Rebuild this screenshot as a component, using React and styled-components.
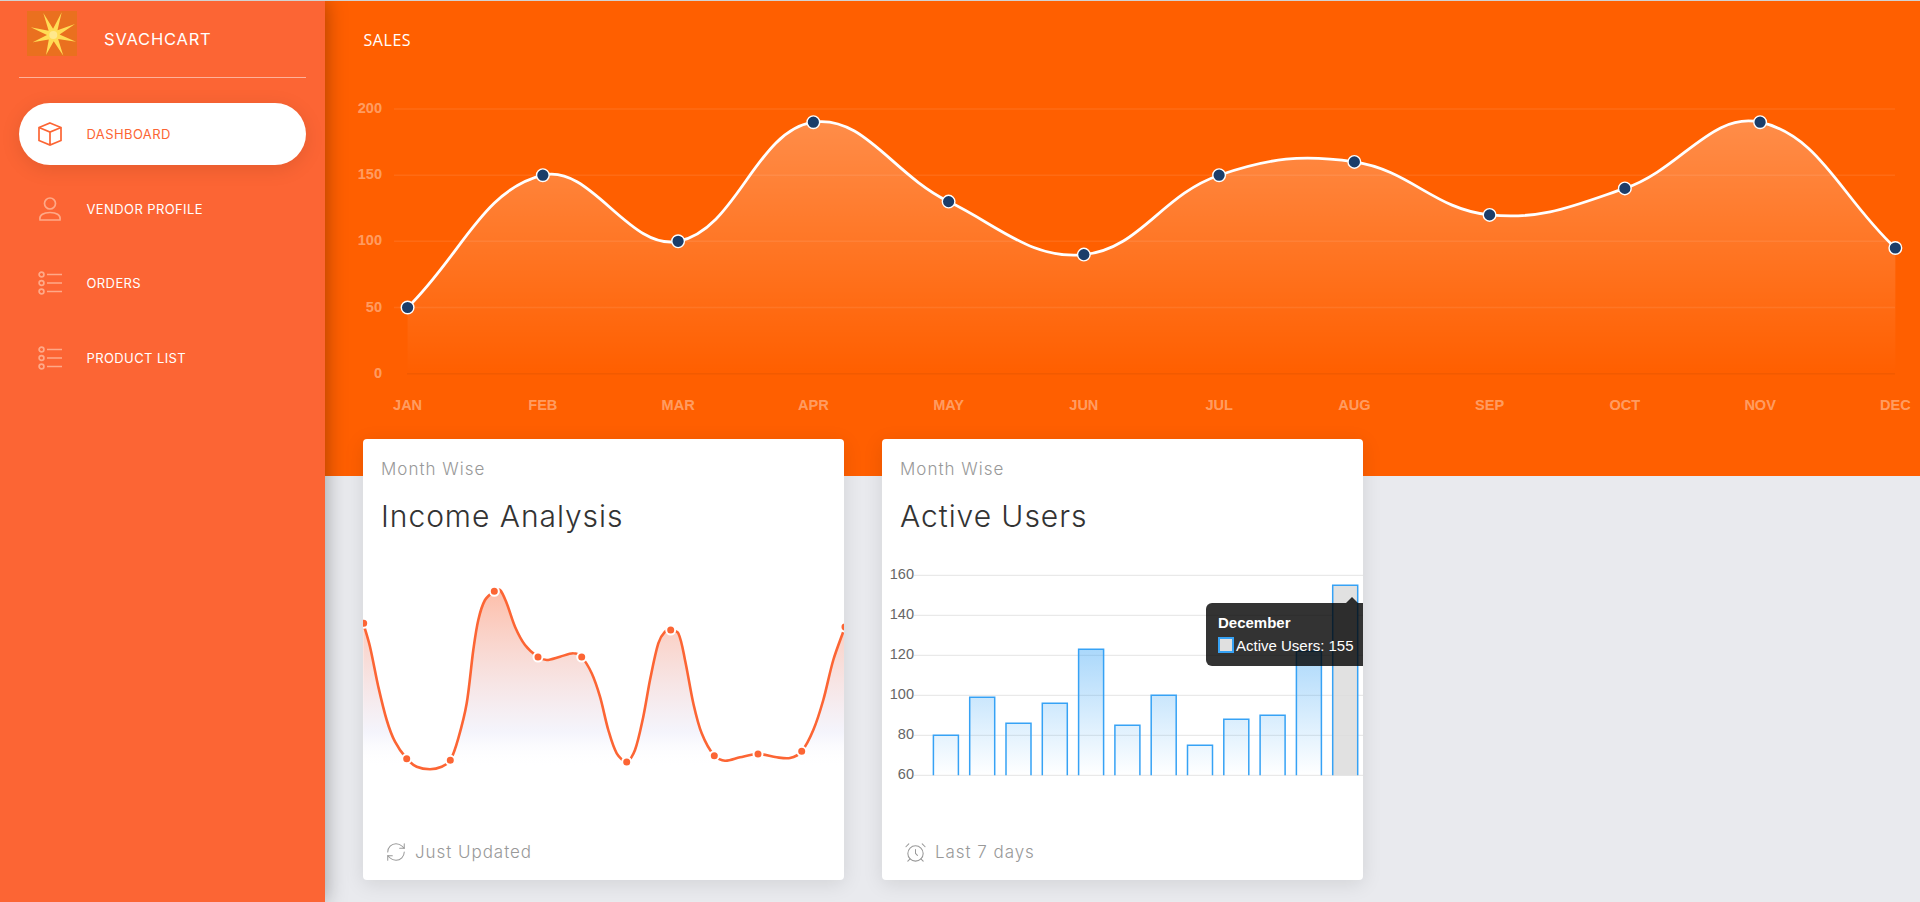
import React from 'react'
import styled, { createGlobalStyle } from 'styled-components'
import { AlarmClock, RefreshCw } from 'lucide-react'

const UI_FONT = `Inter, 'Noto Sans', sans-serif`
const CHART_FONT = `'Liberation Sans', Arial, sans-serif`

// chart.js style spline, tension 0.4
function spline(pts, t = 0.4) {
  let d = `M${pts[0][0]} ${pts[0][1]}`
  const ctrl = pts.map((p, i) => {
    const prev = pts[i - 1] || p
    const next = pts[i + 1] || p
    const d01 = Math.hypot(p[0] - prev[0], p[1] - prev[1])
    const d12 = Math.hypot(next[0] - p[0], next[1] - p[1])
    const sum = d01 + d12 || 1
    const fa = (t * d01) / sum
    const fb = (t * d12) / sum
    return {
      in: [p[0] - fa * (next[0] - prev[0]), p[1] - fa * (next[1] - prev[1])],
      out: [p[0] + fb * (next[0] - prev[0]), p[1] + fb * (next[1] - prev[1])],
    }
  })
  for (let i = 1; i < pts.length; i++) {
    const a = ctrl[i - 1].out
    const b = ctrl[i].in
    d += `C${a[0].toFixed(1)} ${a[1].toFixed(1)} ${b[0].toFixed(1)} ${b[1].toFixed(1)} ${pts[i][0]} ${pts[i][1]}`
  }
  return d
}

const months = ['JAN', 'FEB', 'MAR', 'APR', 'MAY', 'JUN', 'JUL', 'AUG', 'SEP', 'OCT', 'NOV', 'DEC']
const sales = [50, 150, 100, 190, 130, 90, 150, 160, 120, 140, 190, 95]
const salesX = (i) => 407.6 + i * 135.25
const salesY = (v) => 373.7 - v * 1.3235
const salesPts = sales.map((v, i) => [salesX(i), +salesY(v).toFixed(1)])
const salesLine = spline(salesPts)

// traced off the income card, offset by the card position
const incomeTrace = [
  [40, 580], [60, 650], [85, 770], [110, 870], [135, 935], [170, 986], [200, 1010], [240, 1018], [275, 1010],
  [301, 991], [325, 925], [350, 820], [370, 660], [385, 570], [405, 510], [433, 484], [450, 480], [470, 520],
  [495, 590], [525, 645], [564, 681], [590, 690], [630, 680], [670, 670], [695, 681], [725, 730], [750, 800],
  [775, 900], [800, 970], [830, 996], [855, 960], [880, 860], [900, 750], [925, 640], [945, 605], [962, 600],
  [985, 610], [1005, 690], [1030, 820], [1055, 910], [1093, 977], [1125, 992], [1170, 982], [1224, 972],
  [1280, 982], [1320, 984], [1355, 964], [1390, 900], [1420, 810], [1450, 690], [1485, 591],
].map(([x, y]) => [+(350 + x / 3).toFixed(1), +(430 + y / 3).toFixed(1)])
const incomeLine = spline(incomeTrace, 0.3)
const incomeDots = [
  [363.7, 623.3], [406.7, 758.7], [450.3, 760.3], [494.3, 591.3], [538, 657], [581.7, 657],
  [626.7, 762], [670.7, 630], [714.3, 755.7], [758, 754], [801.7, 751.3], [845, 627],
]

const users = [80, 99, 86, 96, 123, 85, 100, 75, 88, 90, 122, 155]
const userTicks = [160, 140, 120, 100, 80, 60]
const userY = (v) => 775.3 - (v - 60) * 2

const starTips = [
  [34.7, 1.3], [48, 13], [49, 30.7], [36.3, 44.7], [19, 44], [5.7, 31.3], [3.7, 16.3], [16.3, 2],
]
const starPoints = starTips
  .flatMap(([x, y], i) => {
    const [nx, ny] = starTips[(i + 1) % starTips.length]
    const mx = (x + nx) / 2 - 26.3
    const my = (y + ny) / 2 - 24
    const len = Math.hypot(mx, my)
    return [`${x},${y}`, `${26.3 + (mx / len) * 6.3},${24 + (my / len) * 6.3}`]
  })
  .join(' ')

function Logo() {
  return (
    <LogoBox viewBox="0 0 50 45">
      <Star points={starPoints} />
      <circle cx="26.3" cy="24" r="4" fill="#FFE88C" />
    </LogoBox>
  )
}

const BoxIcon = () => (
  <NavSvg viewBox="0 0 24 24">
    <path d="M12 1 L23 5.5 V18.5 L12 23 L1 18.5 V5.5 Z M1 5.5 L12 10 L23 5.5 M12 10 V23" />
  </NavSvg>
)

const UserIcon = () => (
  <NavSvg viewBox="0 0 24 24">
    <circle cx="12" cy="6.5" r="5.5" />
    <path d="M2 23 C1 17.5 6 15.5 12 15.5 C18 15.5 23 17.5 22 23 Z" />
  </NavSvg>
)

const ListIcon = () => (
  <NavSvg viewBox="0 0 24 24">
    <circle cx="3.5" cy="3.5" r="2.4" />
    <circle cx="3.5" cy="12" r="2.4" />
    <circle cx="3.5" cy="20.5" r="2.4" />
    <path d="M9 3.5 H24 M9 12 H24 M9 20.5 H24" />
  </NavSvg>
)

const navItems = [
  { label: 'DASHBOARD', icon: BoxIcon, active: true },
  { label: 'VENDOR PROFILE', icon: UserIcon },
  { label: 'ORDERS', icon: ListIcon },
  { label: 'PRODUCT LIST', icon: ListIcon },
]

function SalesChart() {
  return (
    <ChartSvg width="1595" height="370" viewBox="325 60 1595 370">
      <defs>
        <linearGradient id="salesFill" gradientUnits="userSpaceOnUse" x1="0" y1="109" x2="0" y2="373">
          <stop offset="0" stopColor="#fff" stopOpacity="0.3" />
          <stop offset="1" stopColor="#fff" stopOpacity="0" />
        </linearGradient>
      </defs>
      {[200, 150, 100, 50].map((v) => (
        <line key={v} x1="394" x2="1895" y1={salesY(v)} y2={salesY(v)} stroke="rgba(255,255,255,0.08)" strokeWidth="1.5" />
      ))}
      <line x1="407" x2="1895" y1={salesY(0)} y2={salesY(0)} stroke="#F25A00" strokeWidth="1.5" />
      {[200, 150, 100, 50, 0].map((v) => (
        <SalesTick key={v} x="382" y={salesY(v) + 4} textAnchor="end">
          {v}
        </SalesTick>
      ))}
      {months.map((m, i) => (
        <SalesTick key={m} x={salesX(i)} y="410" textAnchor="middle">
          {m}
        </SalesTick>
      ))}
      <path d={`${salesLine}L${salesX(11)} 373.7L${salesX(0)} 373.7Z`} fill="url(#salesFill)" />
      <path d={salesLine} fill="none" stroke="#fff" strokeWidth="2.8" />
      {salesPts.map(([x, y]) => (
        <circle key={x} cx={x} cy={y} r="6.3" fill="#1C3D69" stroke="#fff" strokeWidth="1.4" />
      ))}
    </ChartSvg>
  )
}

function IncomeChart() {
  return (
    <ChartSvg width="482" height="250" viewBox="363 560 482 250">
      <defs>
        <linearGradient id="incomeFill" gradientUnits="userSpaceOnUse" x1="0" y1="591" x2="0" y2="768">
          <stop offset="0" stopColor="#FC6534" stopOpacity="0.42" />
          <stop offset="0.8" stopColor="#DCDCF5" stopOpacity="0.3" />
          <stop offset="1" stopColor="#fff" stopOpacity="0" />
        </linearGradient>
      </defs>
      <path d={`${incomeLine}L845 810L363 810Z`} fill="url(#incomeFill)" />
      <path d={incomeLine} fill="none" stroke="#FC6534" strokeWidth="2.6" />
      {incomeDots.map(([x, y]) => (
        <circle key={x} cx={x} cy={y} r="4.5" fill="#FC6534" stroke="#fff" strokeWidth="2" />
      ))}
    </ChartSvg>
  )
}

function UsersChart() {
  return (
    <ChartArea>
      <ChartSvg width="481" height="250" viewBox="882 560 481 250">
        <defs>
          <linearGradient id="barFill" gradientUnits="userSpaceOnUse" x1="0" y1="640" x2="0" y2="775">
            <stop offset="0" stopColor="#36A2F5" stopOpacity="0.45" />
            <stop offset="1" stopColor="#36A2F5" stopOpacity="0" />
          </linearGradient>
        </defs>
        {userTicks.map((v) => (
          <g key={v}>
            <line x1="914" x2="1363" y1={userY(v)} y2={userY(v)} stroke="#E4E4E4" strokeWidth="1" />
            <UserTick x="914" y={userY(v) + 4} textAnchor="end">
              {v}
            </UserTick>
          </g>
        ))}
        {users.map((v, i) => {
          const x = 933.4 + i * 36.3
          const y = userY(v)
          return (
            <path
              key={i}
              d={`M${x} 775.3V${y}H${x + 25}V775.3`}
              fill={i === 11 ? 'rgba(220,220,220,0.85)' : 'url(#barFill)'}
              stroke="#36A2F5"
              strokeWidth="1.5"
            />
          )
        })}
      </ChartSvg>
      <Tooltip>
        <TooltipTitle>December</TooltipTitle>
        <TooltipRow>
          <Swatch />
          Active Users: 155
        </TooltipRow>
      </Tooltip>
    </ChartArea>
  )
}

function App() {
  return (
    <Page>
      <GlobalStyle />
      <Sidebar>
        <Brand>
          <Logo />
          <BrandName>SVACHCART</BrandName>
        </Brand>
        <Nav>
          {navItems.map(({ label, icon: Icon, active }) => (
            <NavItem key={label} $active={active}>
              <Icon />
              {label}
            </NavItem>
          ))}
        </Nav>
      </Sidebar>
      <Main>
        <Hero>
          <HeroTitle>SALES</HeroTitle>
          <SalesChart />
        </Hero>
        <Cards>
          <Card>
            <CardSub>Month Wise</CardSub>
            <CardTitle>Income Analysis</CardTitle>
            <IncomeChart />
            <CardFooter>
              <RefreshCw size={22} strokeWidth={1.1} />
              Just Updated
            </CardFooter>
          </Card>
          <Card>
            <CardSub>Month Wise</CardSub>
            <CardTitle>Active Users</CardTitle>
            <UsersChart />
            <CardFooter>
              <AlarmClock size={23} strokeWidth={1.1} />
              Last 7 days
            </CardFooter>
          </Card>
        </Cards>
      </Main>
    </Page>
  )
}

const GlobalStyle = createGlobalStyle`
  * {
    box-sizing: border-box;
  }
  body {
    margin: 0;
    background: #e9eaee;
    font-family: ${UI_FONT};
  }
`

const Page = styled.div`
  display: flex;
  height: 902px;
  overflow: hidden;
  border-top: 1px solid #d2d2d2;
`

const Sidebar = styled.aside`
  position: relative;
  z-index: 2;
  flex: 0 0 325px;
  padding: 0 19px;
  background: #fc6534;
  box-shadow: 0 0 20px rgba(0, 0, 0, 0.35);
`

const Brand = styled.div`
  display: flex;
  align-items: center;
  height: 77px;
  padding: 0 0 0 8px;
  border-bottom: 1px solid rgba(255, 255, 255, 0.5);
`

const LogoBox = styled.svg`
  width: 50px;
  height: 45px;
  margin-top: -11px;
  background: #ea701f;
`

const Star = styled.polygon`
  fill: #ffdc55;
  filter: blur(0.4px);
`

const BrandName = styled.span`
  margin-left: 27px;
  color: #fff;
  font-size: 16.5px;
  letter-spacing: 0.8px;
`

const Nav = styled.nav`
  display: flex;
  flex-direction: column;
  gap: 12.5px;
  margin-top: 25px;
`

const NavSvg = styled.svg`
  width: 24px;
  height: 24px;
  fill: none;
  stroke: currentColor;
  stroke-width: 1.7;
`

const NavItem = styled.a`
  display: flex;
  align-items: center;
  gap: 24.5px;
  height: 62px;
  padding-left: 19px;
  border-radius: 31px;
  font-size: 13px;
  letter-spacing: 0.4px;
  color: ${(p) => (p.$active ? '#fc6534' : '#fff')};
  background: ${(p) => (p.$active ? '#fff' : 'transparent')};
  box-shadow: ${(p) => (p.$active ? '0 4px 20px rgba(0, 0, 0, 0.1)' : 'none')};

  svg {
    color: ${(p) => (p.$active ? '#fc6534' : '#fea988')};
  }
`

const Main = styled.main`
  flex: 1;
  min-width: 0;
`

const Hero = styled.section`
  height: 475px;
  background: #ff5f00;
`

const HeroTitle = styled.h2`
  margin: 0;
  padding: 28px 0 9px 38.5px;
  height: 59px;
  color: #fff;
  font-family: 'Open Sans', sans-serif;
  font-size: 16px;
  line-height: 22px;
  font-weight: 400;
  letter-spacing: 0.55px;
`

const ChartSvg = styled.svg`
  display: block;
`

const SalesTick = styled.text`
  font-family: ${CHART_FONT};
  font-size: 14.5px;
  font-weight: 700;
  fill: rgba(255, 255, 255, 0.4);
`

const UserTick = styled.text`
  font-family: ${CHART_FONT};
  font-size: 14.5px;
  fill: #666;
`

const Cards = styled.div`
  display: flex;
  gap: 38px;
  margin-top: -37px;
  padding-left: 38px;
`

const Card = styled.article`
  display: flex;
  flex-direction: column;
  width: 481px;
  height: 441px;
  background: #fff;
  border-radius: 4px;
  box-shadow: 0 4px 20px rgba(0, 0, 0, 0.1);
  overflow: hidden;
`

const CardSub = styled.div`
  margin-top: 20px;
  padding-left: 18px;
  color: #999;
  font-size: 17px;
  font-weight: 300;
  line-height: 20px;
  letter-spacing: 1px;
`

const CardTitle = styled.h3`
  margin: 18px 0 25px;
  padding-left: 18px;
  color: #333;
  font-size: 30px;
  font-weight: 300;
  line-height: 38px;
  letter-spacing: 0.95px;
`

const CardFooter = styled.div`
  display: flex;
  align-items: center;
  gap: 8px;
  margin-top: 30px;
  padding-left: 22px;
  color: #999;
  font-size: 17px;
  font-weight: 300;
  line-height: 24px;
  letter-spacing: 0.95px;
`

const ChartArea = styled.div`
  position: relative;
  height: 250px;
  overflow: hidden;
`

const Tooltip = styled.div`
  position: absolute;
  top: 43px;
  left: 324px;
  width: 165px;
  height: 63px;
  padding: 11px 12px;
  border-radius: 6px;
  background: rgba(0, 0, 0, 0.8);
  color: #fff;
  font-family: ${CHART_FONT};
  font-size: 15px;
  line-height: 17px;

  &::before {
    content: '';
    position: absolute;
    top: -6px;
    left: 140px;
    border: 6px solid transparent;
    border-top: 0;
    border-bottom-color: rgba(0, 0, 0, 0.8);
  }
`

const TooltipTitle = styled.div`
  font-weight: 700;
`

const TooltipRow = styled.div`
  display: flex;
  align-items: center;
  gap: 2px;
  margin-top: 5.5px;
  white-space: nowrap;
`

const Swatch = styled.span`
  flex: 0 0 16px;
  height: 16px;
  background: #e0e0e0;
  border: 2px solid #36a2f5;
`

export default App
